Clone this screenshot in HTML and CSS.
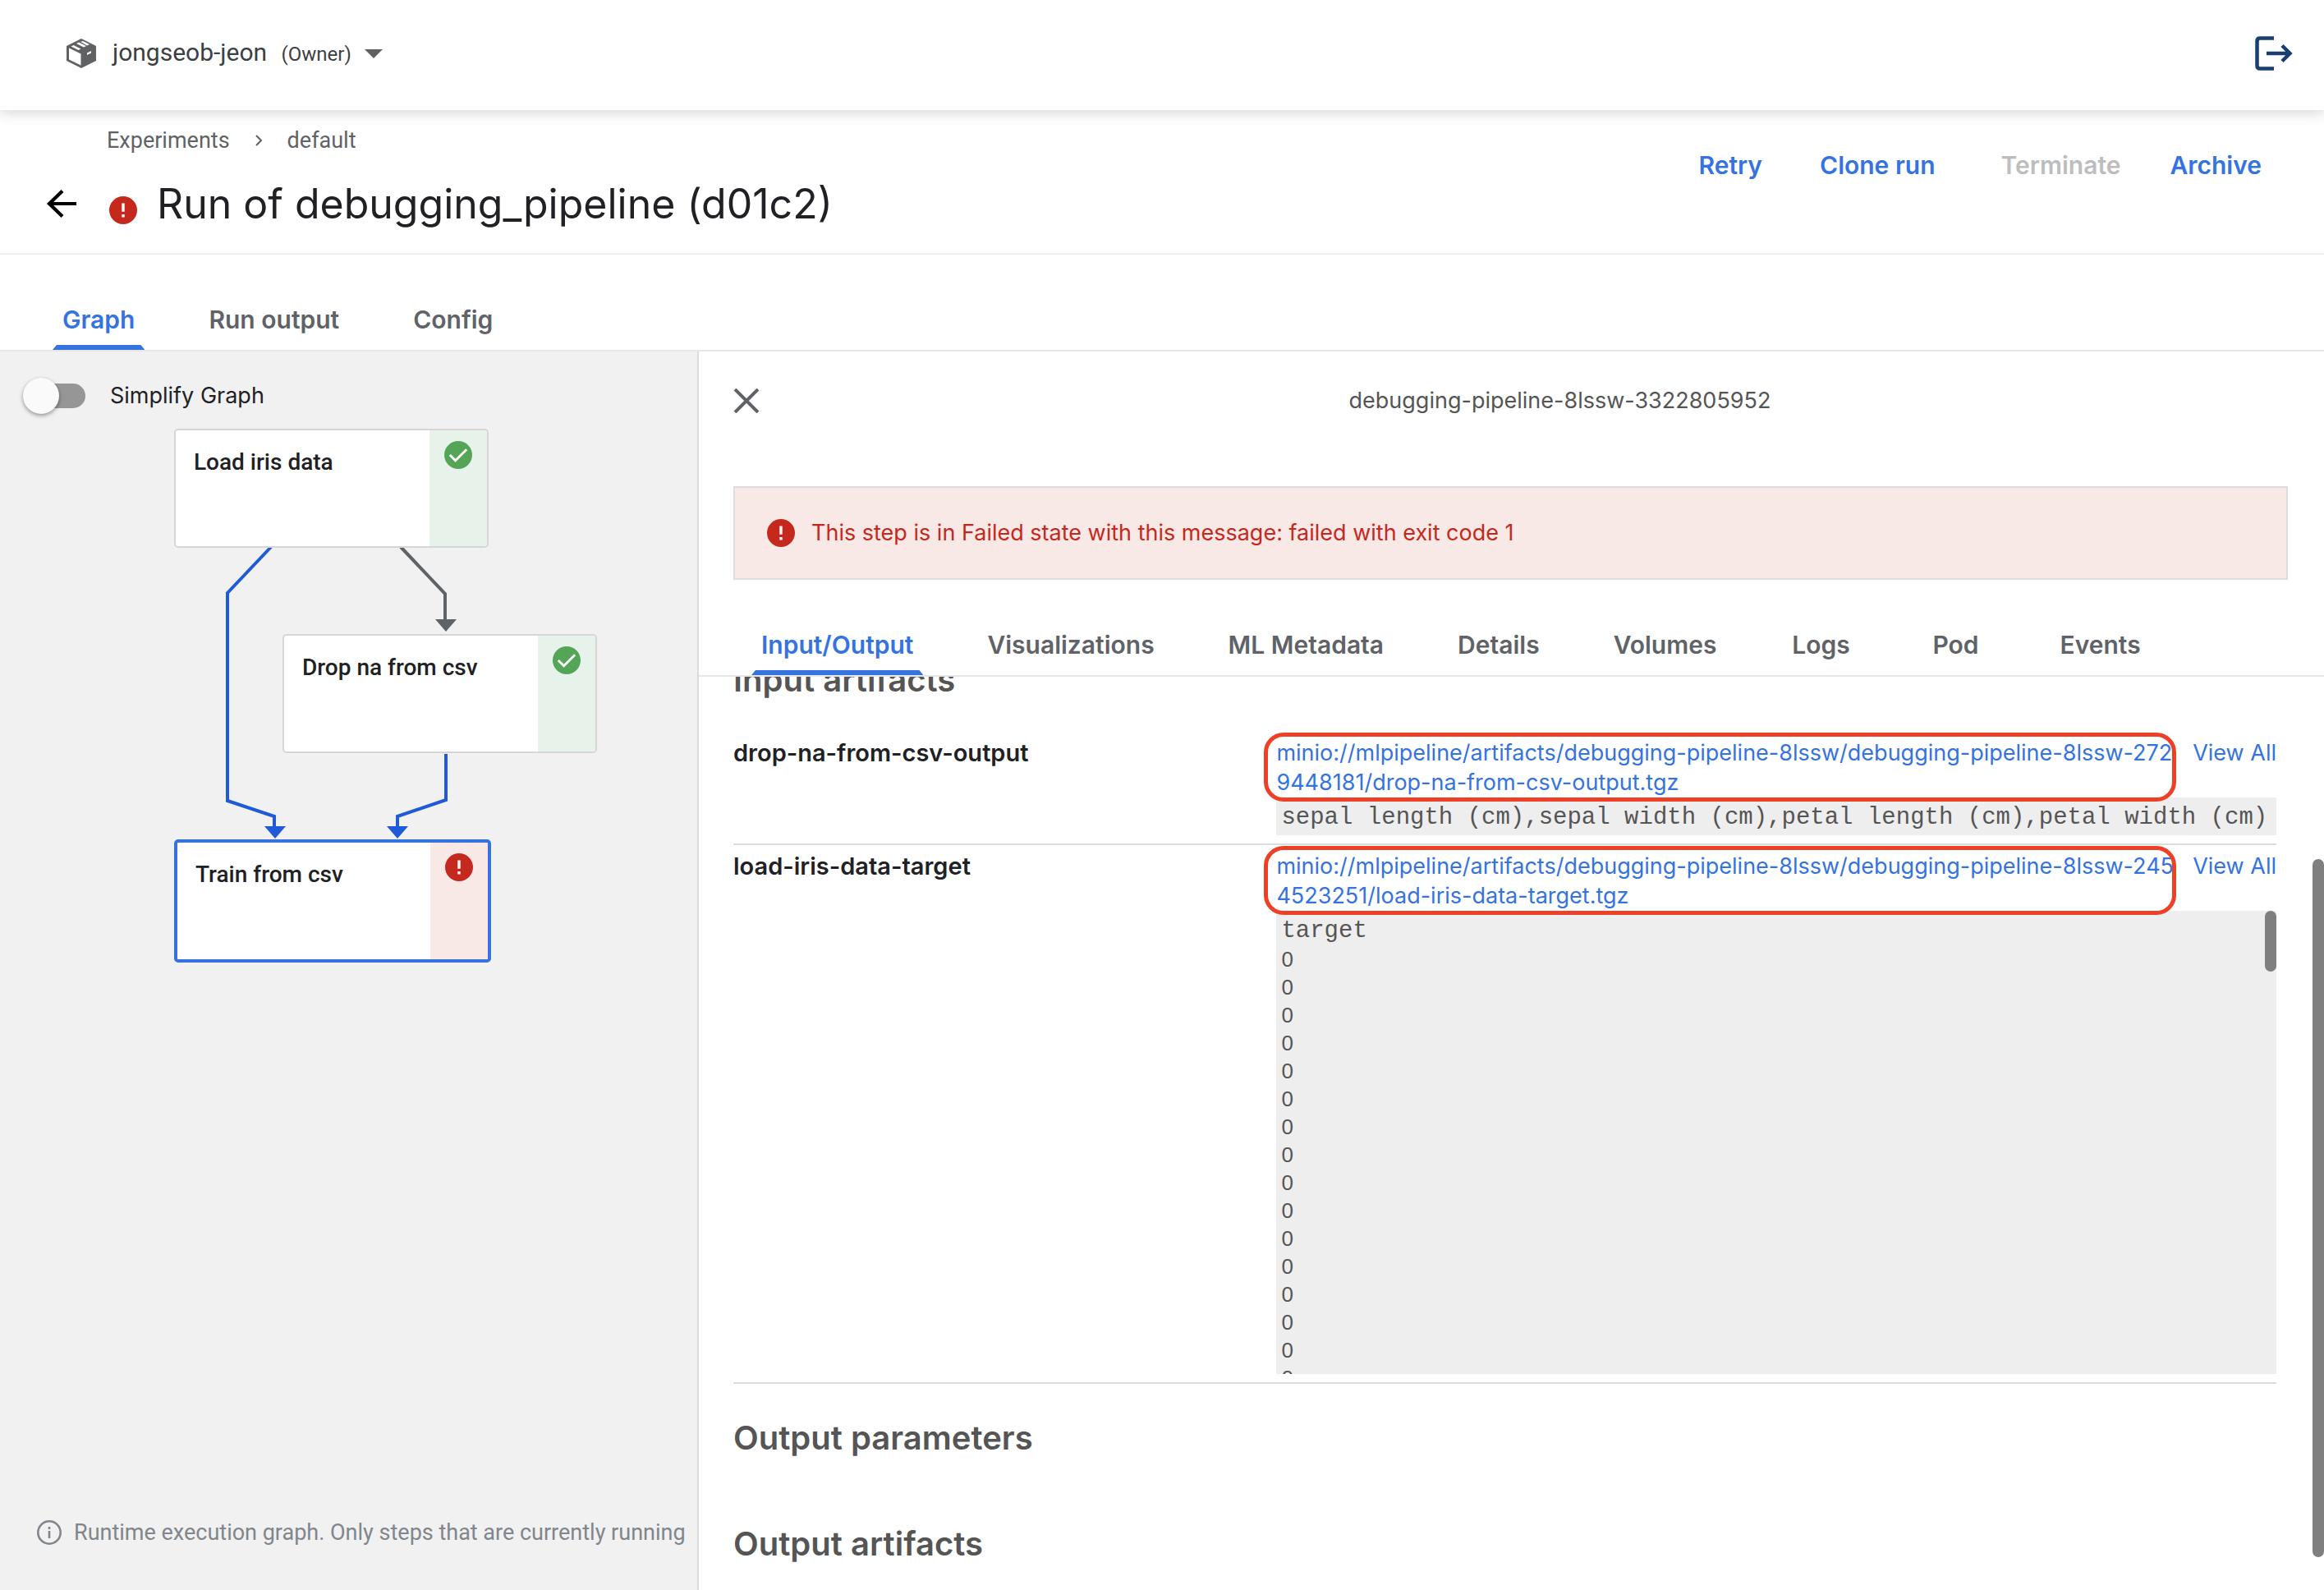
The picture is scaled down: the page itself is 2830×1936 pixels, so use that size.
FILE: index.html
```html
<!DOCTYPE html>
<html lang="en">
<head>
<meta charset="utf-8">
<title>Run of debugging_pipeline (d01c2)</title>
<link rel="stylesheet" href="styles.css">
</head>
<body>
<svg class="defs" aria-hidden="true">
  <symbol id="icon-error" viewBox="0 0 20 20">
    <circle cx="10" cy="10" r="10" fill="#c5281c"/>
    <path d="M9 5h2v6H9zM9 13h2v2H9z" fill="#fff"/>
  </symbol>
  <symbol id="icon-check" viewBox="0 0 20 20">
    <circle cx="10" cy="10" r="10" fill="#54a556"/>
    <path d="M4 10l4 4 8-8" fill="none" stroke="#fff" stroke-width="1.7"/>
  </symbol>
</svg>

<header class="topbar">
  <button class="namespace" type="button">
    <svg class="cube" viewBox="0 0 36 36" aria-hidden="true">
      <path d="M18 0L36 9v18L18 36 0 27V9z" fill="#5f6163"/>
      <path d="M3 11.500l14.500 7v14L3 25.500z" fill="#fff"/>
      <path d="M5.500 9.500L8.500 8l9 4.500-3 1.500zM12 6l3-1.500 9 4.500-3 1.500zM17 3.800L20 3l8 4-3 1.500z" fill="#fff"/>
      <path d="M25 17.500l5-2.500v2.500L25 20z" fill="#fff"/>
    </svg>
    <span class="namespace-name">jongseob-jeon <small>(Owner)</small></span>
    <svg class="caret" viewBox="0 0 22 11" aria-hidden="true"><path d="M0 0h22L11 11z" fill="#5f6163"/></svg>
  </button>
  <button class="logout" type="button" aria-label="Log out">
    <svg viewBox="0 0 46 42" aria-hidden="true"><path d="M23 2.500H6Q2.500 2.500 2.500 6v30q0 3.500 3.500 3.500h17M14 21h29M33 11.500l9.500 9.500-9.500 9.500" fill="none" stroke="#1a3e72" stroke-width="4.500"/></svg>
  </button>
</header>

<section class="toolbar">
  <div class="toolbar-main">
    <nav class="breadcrumbs" aria-label="Breadcrumb">
      <a href="#experiments">Experiments</a>
      <svg viewBox="0 0 8 14" aria-hidden="true"><path d="M1 1l6 6-6 6" fill="none" stroke="#5f6368" stroke-width="2"/></svg>
      <a href="#default">default</a>
    </nav>
    <div class="title-row">
      <button class="back" type="button" aria-label="Back">
        <svg viewBox="0 0 36 34" aria-hidden="true"><path d="M36 17H3M19 1.500L3 17l16 15.500" fill="none" stroke="#000" stroke-width="4.200"/></svg>
      </button>
      <svg class="run-status" role="img" aria-label="Failed"><use href="#icon-error"/></svg>
      <h1>Run of debugging_pipeline (d01c2)</h1>
    </div>
  </div>
  <div class="actions">
    <div class="action-group">
      <button type="button">Retry</button>
      <button type="button">Clone run</button>
    </div>
    <div class="action-group action-group-end">
      <button type="button" disabled>Terminate</button>
      <button type="button">Archive</button>
    </div>
  </div>
</section>

<nav class="tabs page-tabs" aria-label="Run views">
  <button class="tab active" type="button">Graph</button>
  <button class="tab" type="button">Run output</button>
  <button class="tab" type="button">Config</button>
</nav>

<main class="content">
  <section class="graph-pane">
    <label class="simplify"><input type="checkbox" role="switch"><span>Simplify Graph</span></label>
    <div class="graph">
      <svg class="edges" viewBox="0 0 600 690" aria-hidden="true">
        <g fill="none" stroke-width="4">
          <path d="M330 144L277 200V453L334 472V486" stroke="#1f5bd8"/>
          <path d="M488 144L542 201V236" stroke="#5f6368"/>
          <path d="M543 396V452L484 472V486" stroke="#1f5bd8"/>
        </g>
        <path d="M322 484h26l-13 15zM471 484h26l-13 15z" fill="#1f5bd8"/>
        <path d="M530 232h26l-13 15z" fill="#5f6368"/>
      </svg>
      <button class="node node-load" type="button"><span>Load iris data</span><i><svg><use href="#icon-check"/></svg></i></button>
      <button class="node node-drop" type="button"><span>Drop na from csv</span><i><svg><use href="#icon-check"/></svg></i></button>
      <button class="node node-train failed" type="button"><span>Train from csv</span><i><svg><use href="#icon-error"/></svg></i></button>
    </div>
    <p class="graph-note">
      <svg viewBox="0 0 30 30" aria-hidden="true"><circle cx="15" cy="15" r="13.700" fill="none" stroke="#80868b" stroke-width="2.600"/><path d="M13.700 13h2.600v9h-2.600zM13.700 8h2.600v3h-2.600z" fill="#80868b"/></svg>
      <span>Runtime execution graph. Only steps that are currently running</span>
    </p>
  </section>

  <aside class="side-panel">
    <div class="panel-head">
      <button class="close" type="button" aria-label="Close">
        <svg viewBox="0 0 32 30" aria-hidden="true"><path d="M2 1l28 28M30 1L2 29" stroke="#5f6368" stroke-width="4"/></svg>
      </button>
      <h2 class="panel-title">debugging-pipeline-8lssw-3322805952</h2>
    </div>
    <div class="banner" role="alert">
      <svg aria-hidden="true"><use href="#icon-error"/></svg>
      <span>This step is in Failed state with this message: failed with exit code 1</span>
    </div>
    <nav class="tabs panel-tabs" aria-label="Step details">
      <button class="tab active" type="button">Input/Output</button>
      <button class="tab" type="button">Visualizations</button>
      <button class="tab" type="button">ML Metadata</button>
      <button class="tab" type="button">Details</button>
      <button class="tab" type="button">Volumes</button>
      <button class="tab" type="button">Logs</button>
      <button class="tab" type="button">Pod</button>
      <button class="tab" type="button">Events</button>
    </nav>
    <div class="panel-body">
      <div class="panel-scroll">
        <h3>Input artifacts</h3>
        <div class="artifact">
          <div class="artifact-name">drop-na-from-csv-output</div>
          <div class="artifact-value">
            <div class="artifact-links">
              <div class="marked"><a href="#drop-na-output">minio://mlpipeline/artifacts/debugging-pipeline-8lssw/debugging-pipeline-8lssw-2729448181/drop-na-from-csv-output.tgz</a></div>
              <a class="view-all" href="#drop-na-all">View All</a>
            </div>
            <pre>sepal length (cm),sepal width (cm),petal length (cm),petal width (cm)</pre>
          </div>
        </div>
        <div class="artifact">
          <div class="artifact-name">load-iris-data-target</div>
          <div class="artifact-value">
            <div class="artifact-links">
              <div class="marked"><a href="#load-iris-target">minio://mlpipeline/artifacts/debugging-pipeline-8lssw/debugging-pipeline-8lssw-2454523251/load-iris-data-target.tgz</a></div>
              <a class="view-all" href="#load-iris-all">View All</a>
            </div>
            <div class="preview">
              <pre>target<span class="values">0
0
0
0
0
0
0
0
0
0
0
0
0
0
0
0</span></pre>
              <div class="thumb preview-thumb"></div>
            </div>
          </div>
        </div>
        <h3>Output parameters</h3>
        <h3>Output artifacts</h3>
      </div>
      <div class="thumb panel-thumb"></div>
    </div>
  </aside>
</main>
</body>
</html>
```
FILE: styles.css
```css
* { box-sizing: border-box; }

body {
  margin: 0;
  height: 100vh;
  display: flex;
  flex-direction: column;
  overflow: hidden;
  background: #fff;
  color: #202124;
  font: 27px/36px Inter, sans-serif;
}

button {
  margin: 0;
  padding: 0;
  border: 0;
  background: none;
  color: inherit;
  font: inherit;
  text-align: left;
  cursor: pointer;
}

a { color: inherit; text-decoration: none; }
h1, h2, h3, p, pre { margin: 0; }
svg { display: block; flex: none; }
.defs { position: absolute; width: 0; height: 0; }

/* Top bar */
.topbar {
  position: relative;
  z-index: 1;
  display: flex;
  justify-content: space-between;
  align-items: center;
  height: 134px;
  padding: 0 38px 4px 81px;
  background: #fff;
  box-shadow: 0 2px 16px rgba(60, 64, 67, 0.25);
}
.namespace {
  display: flex;
  align-items: center;
  color: #3c4043;
  font: 30px/36px Roboto, sans-serif;
}
.cube { width: 36px; height: 36px; margin-right: 20px; }
.namespace small { margin-left: 10px; font-size: 24px; }
.caret { width: 22px; height: 11px; margin-left: 16px; }
.logout svg { width: 46px; height: 42px; }

/* Toolbar */
.toolbar {
  display: flex;
  justify-content: space-between;
  height: 176px;
  padding: 21px 76px 0 56px;
  border-bottom: 2px solid #eee;
}
.breadcrumbs {
  display: flex;
  align-items: center;
  gap: 31px;
  padding-left: 74px;
  color: #5f6368;
  font: 27px/32px Roboto, sans-serif;
}
.breadcrumbs svg { width: 8px; height: 14px; }
.title-row { display: flex; align-items: center; margin-top: 31px; }
.back svg { width: 38px; height: 34px; }
.run-status { width: 34px; height: 34px; margin: 16px 24px 0 39px; }
h1 { font-size: 50px; line-height: 60px; font-weight: 400; }
.actions { display: flex; gap: 80px; padding-top: 28px; height: 64px; }
.action-group { display: flex; gap: 70px; }
.action-group-end { gap: 60px; }
.actions button { color: #3473e0; font-size: 30px; font-weight: 600; }
.actions button:disabled { color: #bdbdbd; cursor: default; }

/* Tabs */
.tabs { display: flex; gap: 66px; border-bottom: 2px solid #e6e6e6; }
.page-tabs { padding: 61px 64px 0; }
.panel-tabs { padding: 61px 64px 0; }
.tab {
  min-width: 98px;
  padding: 0 12px;
  color: #5f6368;
  font-size: 30px;
  font-weight: 600;
  text-align: center;
  white-space: nowrap;
}
.tab::after {
  content: "";
  display: block;
  height: 6px;
  margin: 13px -12px 0;
}
.tab.active { color: #3473e0; }
.tab.active::after {
  background: #3473e0;
  clip-path: polygon(5px 0, calc(100% - 5px) 0, 100% 100%, 0 100%);
}

/* Two panes */
.content { flex: 1; display: flex; min-height: 0; }
.graph-pane {
  flex: 0 0 30%;
  min-width: 0;
  display: flex;
  flex-direction: column;
  overflow: hidden;
  background: #f1f1f1;
}
.simplify {
  display: flex;
  align-items: center;
  gap: 30px;
  height: 94px;
  padding: 32px 28px 18px;
}
.simplify input {
  appearance: none;
  position: relative;
  flex: none;
  width: 76px;
  height: 30px;
  margin: 0;
  border-radius: 15px;
  background: linear-gradient(#969696, #969696) right / 60px 30px no-repeat;
}
.simplify input::before {
  content: "";
  position: absolute;
  left: 0;
  top: -7px;
  width: 44px;
  height: 44px;
  border-radius: 50%;
  background: #fafafa;
  box-shadow: 0 2px 5px rgba(0, 0, 0, 0.4);
}

/* The graph is a free canvas: nodes are placed by coordinates */
.graph { position: relative; flex: 1; }
.edges { position: absolute; left: 0; top: 0; width: 600px; height: 690px; }
.node {
  position: absolute;
  display: flex;
  justify-content: space-between;
  width: 383px;
  height: 145px;
  border: 2px solid #d6d6d6;
  border-radius: 5px;
  background: #fff;
  overflow: hidden;
  font: 500 28px/36px Roboto, sans-serif;
}
.node span { padding: 21px 0 0 22px; }
.node i {
  display: flex;
  justify-content: center;
  width: 70px;
  padding-top: 13px;
  background: #e7f3ea;
}
.node svg { width: 34px; height: 34px; }
.node.failed {
  width: 386px;
  height: 150px;
  border: 4px solid #3473e0;
}
.node.failed i { background: #f8e9e6; }
.node-load { left: 212px; top: 0; }
.node-drop { left: 344px; top: 250px; }
.node-train { left: 212px; top: 500px; }

.graph-note {
  display: flex;
  align-items: center;
  gap: 15px;
  padding: 0 0 52px 45px;
  color: #80868b;
  font: 27px/36px Roboto, sans-serif;
  white-space: nowrap;
}
.graph-note svg { width: 30px; height: 30px; }

/* Side panel */
.side-panel {
  flex: 1;
  min-width: 0;
  display: flex;
  flex-direction: column;
  border-left: 2px solid #dcdcdc;
}
.panel-head { display: flex; align-items: center; height: 120px; }
.close { width: 118px; padding-left: 42px; }
.close svg { width: 32px; height: 30px; }
.panel-title {
  flex: 1;
  color: #555;
  font-size: 27px;
  line-height: 36px;
  font-weight: 400;
  text-align: center;
}
.banner {
  display: flex;
  align-items: center;
  gap: 20px;
  height: 114px;
  margin: 44px 44px 0 42px;
  padding-left: 39px;
  border: 2px solid #ddd;
  background: #f8e9e6;
  color: #c5281c;
}
.banner svg { width: 34px; height: 34px; }

.panel-body { position: relative; flex: 1; min-height: 0; overflow: hidden; }
.panel-scroll { margin-top: -62px; padding: 0 58px 0 42px; }
h3 {
  padding: 42px 0 39px;
  color: #555;
  font-size: 40px;
  line-height: 48px;
  font-weight: 600;
}
.artifact {
  display: grid;
  grid-template-columns: 35.2% minmax(0, 1fr);
  padding: 8px 0 10px;
  border-bottom: 2px solid #ddd;
}
.artifact-name { font-size: 29px; font-weight: 600; }
.artifact-links { display: flex; gap: 16px; color: #3473e0; }
.marked { position: relative; flex: 1; word-break: break-all; }
.marked::after {
  content: "";
  position: absolute;
  z-index: 1;
  inset: -7px 4px -5px -15px;
  border: 5px solid #ee4027;
  border-radius: 24px;
  pointer-events: none;
}
.view-all { flex: none; }
pre {
  padding: 8px 6px 4px;
  overflow: hidden;
  background: #eee;
  color: #555;
  font: 29px/34px "Liberation Mono", monospace;
}
.preview { position: relative; }
.preview pre { height: 564px; }
.values { display: block; font: 26px/34px "Liberation Sans", sans-serif; }
.thumb {
  position: absolute;
  right: 0;
  width: 14px;
  border-radius: 7px;
  background: #7f7f7f;
}
.preview-thumb { top: 0; height: 74px; }
.panel-thumb { top: 20%; bottom: 40px; }
```
